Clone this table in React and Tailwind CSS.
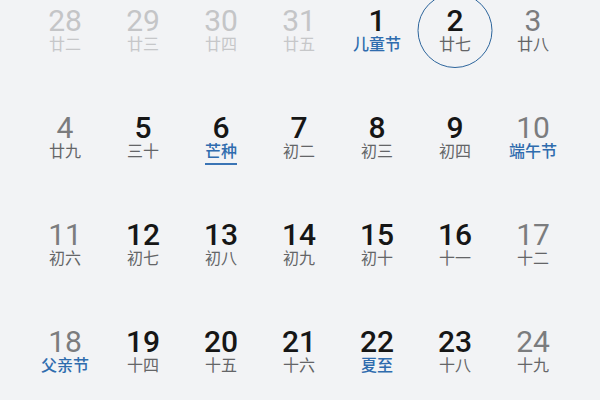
import React from 'react';

const rows = [
  [
    { d: '28', l: '廿二', t: 'prev' },
    { d: '29', l: '廿三', t: 'prev' },
    { d: '30', l: '廿四', t: 'prev' },
    { d: '31', l: '廿五', t: 'prev' },
    { d: '1', l: '儿童节', t: 'day', f: true },
    { d: '2', l: '廿七', t: 'day', today: true },
    { d: '3', l: '廿八', t: 'weekend' },
  ],
  [
    { d: '4', l: '廿九', t: 'weekend' },
    { d: '5', l: '三十', t: 'day' },
    { d: '6', l: '芒种', t: 'day', f: true, term: true },
    { d: '7', l: '初二', t: 'day' },
    { d: '8', l: '初三', t: 'day' },
    { d: '9', l: '初四', t: 'day' },
    { d: '10', l: '端午节', t: 'weekend', f: true },
  ],
  [
    { d: '11', l: '初六', t: 'weekend' },
    { d: '12', l: '初七', t: 'day' },
    { d: '13', l: '初八', t: 'day' },
    { d: '14', l: '初九', t: 'day' },
    { d: '15', l: '初十', t: 'day' },
    { d: '16', l: '十一', t: 'day' },
    { d: '17', l: '十二', t: 'weekend' },
  ],
  [
    { d: '18', l: '父亲节', t: 'weekend', f: true },
    { d: '19', l: '十四', t: 'day' },
    { d: '20', l: '十五', t: 'day' },
    { d: '21', l: '十六', t: 'day' },
    { d: '22', l: '夏至', t: 'day', f: true },
    { d: '23', l: '十八', t: 'day' },
    { d: '24', l: '十九', t: 'weekend' },
  ],
];

const numColor = {
  prev: 'text-[#c4c5c7] font-normal',
  weekend: 'text-[#7b7c7e] font-normal',
  day: 'text-[#161616] font-medium',
};

function Cell({ c }) {
  const lunarColor = c.f
    ? 'text-[#2f6cae] font-medium'
    : c.t === 'prev'
    ? 'text-[#c6c7c9]'
    : 'text-[#646567]';
  return (
    <div className="relative flex flex-col items-center">
      {c.today && (
        <div className="absolute left-1/2 top-[-13px] -translate-x-1/2 w-[75px] h-[75px] rounded-full border-[1.5px] border-[#2d659c]" />
      )}
      <div className={`text-[30px] leading-[30px] ${numColor[c.t]}`}>{c.d}</div>
      <div className={`relative text-[16px] leading-[18px] ${lunarColor}`}>
        {c.l}
        {c.term && <div className="absolute left-0 right-0 -bottom-[4px] h-[2px] bg-[#3a74b5]" />}
      </div>
    </div>
  );
}

export default function App() {
  return (
    <div
      className="w-[600px] h-[400px] overflow-hidden bg-[#f2f3f5]"
      style={{ fontFamily: 'Roboto, "Noto Sans CJK SC", sans-serif' }}
    >
      <div className="ml-[26px] w-[546px] pt-[6px] flex flex-col">
        {rows.map((r, i) => (
          <div key={i} className="grid grid-cols-7 h-[107px]">
            {r.map((c) => (
              <Cell key={c.d} c={c} />
            ))}
          </div>
        ))}
      </div>
    </div>
  );
}
